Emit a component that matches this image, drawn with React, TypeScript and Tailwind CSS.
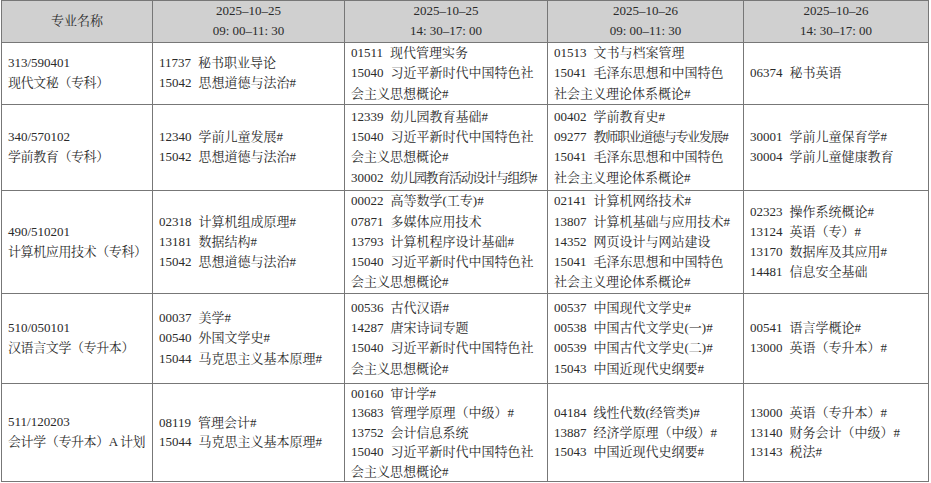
const headers = [
  ["2025–10–25", "09: 00–11: 30"],
  ["2025–10–25", "14: 30–17: 00"],
  ["2025–10–26", "09: 00–11: 30"],
  ["2025–10–26", "14: 30–17: 00"],
];

// "~" at the start marks a line that is set tighter in the original
const rows = [
  {
    major: ["313/590401", "现代文秘（专科）"],
    h: "h-[62px]",
    lh: "h-[20.4px] leading-[20.4px]",
    cells: [
      ["11737|秘书职业导论", "15042|思想道德与法治#"],
      ["01511|现代管理实务", "15040|习近平新时代中国特色社", "会主义思想概论#"],
      ["01513|文书与档案管理", "15041|毛泽东思想和中国特色", "社会主义理论体系概论#"],
      ["06374|秘书英语"],
    ],
  },
  {
    major: ["340/570102", "学前教育（专科）"],
    h: "h-[86px]",
    lh: "h-[20.4px] leading-[20.4px]",
    cells: [
      ["12340|学前儿童发展#", "15042|思想道德与法治#"],
      ["12339|幼儿园教育基础#", "15040|习近平新时代中国特色社", "会主义思想概论#", "~30002|幼儿园教育活动设计与组织#"],
      ["00402|学前教育史#", "~09277|教师职业道德与专业发展#", "15041|毛泽东思想和中国特色", "社会主义理论体系概论#"],
      ["30001|学前儿童保育学#", "30004|学前儿童健康教育"],
    ],
  },
  {
    major: ["490/510201", "计算机应用技术（专科）"],
    h: "h-[103px]",
    lh: "h-[20.2px] leading-[20.2px]",
    cells: [
      ["02318|计算机组成原理#", "13181|数据结构#", "15042|思想道德与法治#"],
      ["00022|高等数学(工专)#", "07871|多媒体应用技术", "13793|计算机程序设计基础#", "15040|习近平新时代中国特色社", "会主义思想概论#"],
      ["02141|计算机网络技术#", "13807|计算机基础与应用技术#", "14352|网页设计与网站建设", "15041|毛泽东思想和中国特色", "社会主义理论体系概论#"],
      ["02323|操作系统概论#", "13124|英语（专）#", "13170|数据库及其应用#", "14481|信息安全基础"],
    ],
  },
  {
    major: ["510/050101", "汉语言文学（专升本）"],
    h: "h-[90px]",
    lh: "h-[20.4px] leading-[20.4px]",
    cells: [
      ["00037|美学#", "00540|外国文学史#", "15044|马克思主义基本原理#"],
      ["00536|古代汉语#", "14287|唐宋诗词专题", "15040|习近平新时代中国特色社", "会主义思想概论#"],
      ["00537|中国现代文学史#", "00538|中国古代文学史(一)#", "00539|中国古代文学史(二)#", "15043|中国近现代史纲要#"],
      ["00541|语言学概论#", "13000|英语（专升本）#"],
    ],
  },
  {
    major: ["511/120203", "会计学（专升本）A 计划"],
    h: "h-[98px]",
    lh: "h-[19.4px] leading-[19.4px]",
    cells: [
      ["08119|管理会计#", "15044|马克思主义基本原理#"],
      ["00160|审计学#", "13683|管理学原理（中级）#", "13752|会计信息系统", "15040|习近平新时代中国特色社", "会主义思想概论#"],
      ["04184|线性代数(经管类)#", "13887|经济学原理（中级）#", "15043|中国近现代史纲要#"],
      ["13000|英语（专升本）#", "13140|财务会计（中级）#", "13143|税法#"],
    ],
  },
];

function Line({ text, lh }: { text: string; lh: string }) {
  const tight = text.startsWith("~");
  const t = tight ? text.slice(1) : text;
  const [code, name] = t.includes("|") ? t.split("|") : ["", t];
  return (
    <div className={lh + " whitespace-nowrap"}>
      {code && <span>{code}</span>}
      <span className={(code ? "pl-[7px] " : "") + (tight ? "tracking-[-1.3px]" : "")}>{name}</span>
    </div>
  );
}

export default function App() {
  return (
    <div className="bg-white w-[931px] h-[483px] text-[13px] leading-[20.4px] text-[#2a2a2a] font-['Liberation_Serif','Noto_Serif_CJK_SC','Noto_Sans_CJK_SC',serif]">
      <table className="border-collapse table-fixed w-[927px] ml-px">
        <colgroup>
          <col className="w-[151px]" />
          <col className="w-[192px]" />
          <col className="w-[203px]" />
          <col className="w-[196px]" />
          <col className="w-[185px]" />
        </colgroup>
        <thead>
          <tr className="h-[41px] bg-[#d0d0d0]">
            <th className="border border-[#777] font-normal text-center align-middle p-0">
              <div className="h-[20.4px]">专业名称</div>
            </th>
            {headers.map((h, i) => (
              <th key={i} className="border border-[#777] font-normal text-center align-middle p-0">
                <div className="h-[20.4px]">{h[0]}</div>
                <div className="h-[20.4px]">{h[1]}</div>
              </th>
            ))}
          </tr>
        </thead>
        <tbody>
          {rows.map((row) => (
            <tr key={row.major[0]} className={row.h}>
              <td className="border border-[#777] align-middle pl-[6px] pr-0 py-0">
                <div className="h-[20.4px] leading-[20.4px] whitespace-nowrap">{row.major[0]}</div>
                <div className="h-[20.4px] leading-[20.4px] whitespace-nowrap tracking-[-0.4px]">{row.major[1]}</div>
              </td>
              {row.cells.map((lines, i) => (
                <td key={i} className="border border-[#777] align-middle pl-[6px] pr-0 py-0">
                  {lines.map((l, j) => (
                    <Line key={j} text={l} lh={row.lh} />
                  ))}
                </td>
              ))}
            </tr>
          ))}
        </tbody>
      </table>
    </div>
  );
}
